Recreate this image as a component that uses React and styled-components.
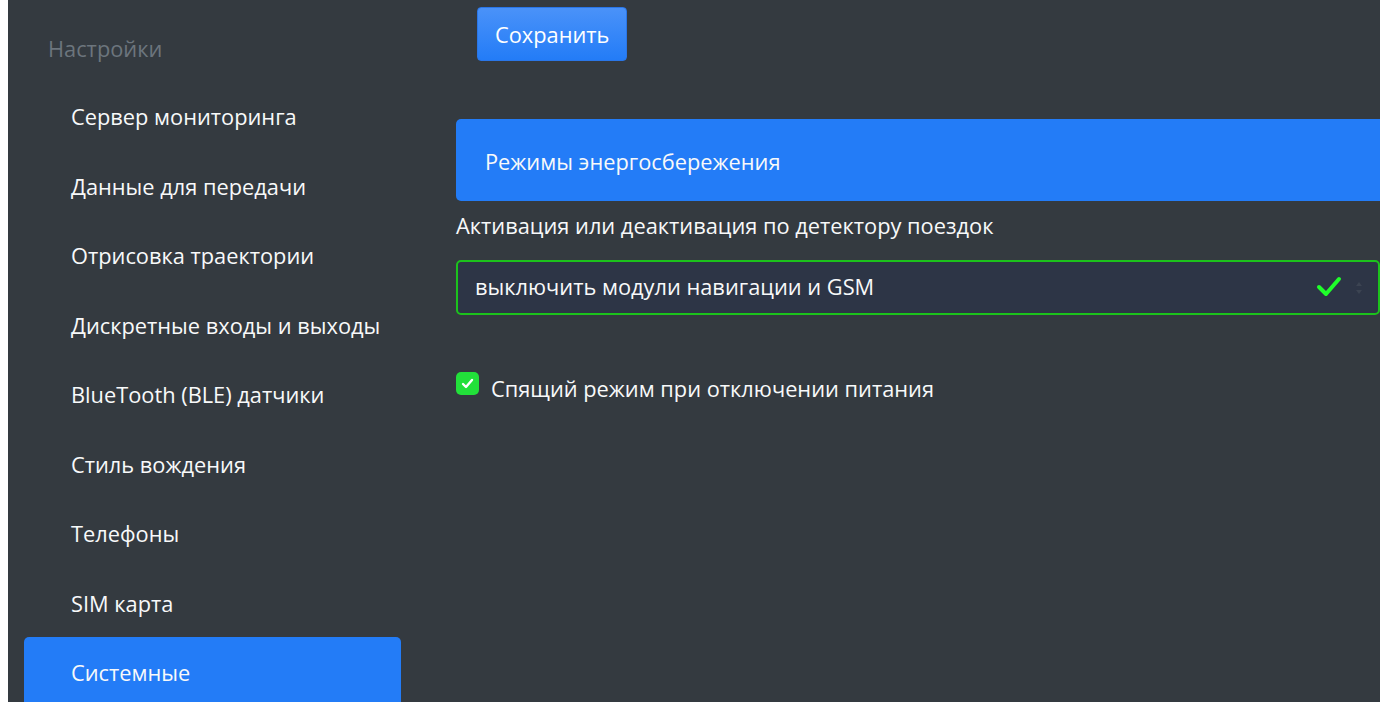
import React from "react";
import styled, { createGlobalStyle } from "styled-components";

const GlobalStyle = createGlobalStyle`
  html, body {
    margin: 0;
    padding: 0;
    background: #ffffff;
  }
  body {
    padding-left: 8px;
    font-family: "Open Sans", "Noto Sans", "Liberation Sans", sans-serif;
  }
`;

const Page = styled.div`
  display: flex;
  height: 702px;
  background: #343a40;
  color: #f8f9fa;
  font-size: 21.8px;
  overflow: hidden;
`;

const Sidebar = styled.nav`
  width: 440px;
  flex-shrink: 0;
  padding: 0 47px 0 16px;
  box-sizing: border-box;
`;

const SidebarTitle = styled.div`
  color: #6c757d;
  line-height: 28px;
  padding: 35px 0 0 24px;
  height: 81px;
  box-sizing: border-box;
`;

const NavItem = styled.div`
  line-height: 28px;
  padding: 22px 0 19.5px 47px;
  border-radius: 5px;
  white-space: nowrap;
  background: ${(p) => (p.$active ? "#237cf7" : "transparent")};
  color: #f8f9fa;
`;

const Main = styled.main`
  flex: 1;
  display: flex;
  flex-direction: column;
  padding-left: 8px;
`;

const SaveButton = styled.button`
  align-self: flex-start;
  margin: 7px 0 0 21px;
  height: 54px;
  padding: 0 17px;
  border: 1px solid #2a76e8;
  border-radius: 4px;
  background: linear-gradient(#4a92f9, #237cf7);
  color: #ffffff;
  font-family: inherit;
  font-size: inherit;
`;

const SectionHeader = styled.div`
  margin-top: 58px;
  height: 82px;
  display: flex;
  align-items: center;
  padding: 2px 0 0 29px;
  box-sizing: border-box;
  background: #237cf7;
  border-radius: 5px 0 0 5px;
`;

const FieldLabel = styled.div`
  margin-top: 11px;
  line-height: 28px;
`;

const Select = styled.div`
  margin-top: 20px;
  height: 55px;
  box-sizing: border-box;
  display: flex;
  align-items: center;
  padding: 0 14px 3px 17px;
  border: 2px solid #1cc21c;
  border-radius: 5px;
  background: #2d3546;
`;

const SelectValue = styled.span`
  flex: 1;
`;

const Arrows = styled.svg`
  margin-left: 12px;
  margin-top: 3px;
`;

const CheckRow = styled.label`
  margin-top: 60px;
  display: flex;
  align-items: center;
  gap: 12px;
  line-height: 28px;
`;

const CheckBox = styled.span`
  width: 23px;
  height: 23px;
  border-radius: 5px;
  background: #22e03a;
  display: flex;
  align-items: center;
  justify-content: center;
  margin-top: -12px;
`;

const menu = [
  "Сервер мониторинга",
  "Данные для передачи",
  "Отрисовка траектории",
  "Дискретные входы и выходы",
  "BlueTooth (BLE) датчики",
  "Стиль вождения",
  "Телефоны",
  "SIM карта",
  "Системные",
];

const App = () => (
  <>
    <GlobalStyle />
    <Page>
      <Sidebar>
        <SidebarTitle>Настройки</SidebarTitle>
        {menu.map((item) => (
          <NavItem key={item} $active={item === "Системные"}>
            {item}
          </NavItem>
        ))}
      </Sidebar>
      <Main>
        <SaveButton>Сохранить</SaveButton>
        <SectionHeader>Режимы энергосбережения</SectionHeader>
        <FieldLabel>Активация или деактивация по детектору поездок</FieldLabel>
        <Select>
          <SelectValue>выключить модули навигации и GSM</SelectValue>
          <svg width="26" height="22" viewBox="0 0 26 22">
            <path
              d="M3 12 L10 19 L23 4"
              fill="none"
              stroke="#1fff2a"
              strokeWidth="4"
              strokeLinecap="round"
              strokeLinejoin="round"
            />
          </svg>
          <Arrows width="10" height="18" viewBox="0 0 10 18">
            <path d="M2 7 L5 3 L8 7 Z M2 11 L5 15 L8 11 Z" fill="#3c4452" />
          </Arrows>
        </Select>
        <CheckRow>
          <CheckBox>
            <svg width="13" height="11" viewBox="0 0 13 11">
              <path
                d="M2 6 L5 9 L11 2"
                fill="none"
                stroke="#ffffff"
                strokeWidth="2.4"
                strokeLinecap="round"
                strokeLinejoin="round"
              />
            </svg>
          </CheckBox>
          Спящий режим при отключении питания
        </CheckRow>
      </Main>
    </Page>
  </>
);

export default App;
